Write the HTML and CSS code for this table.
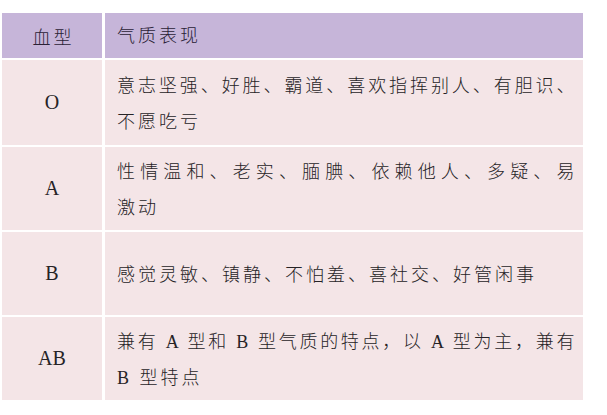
FILE: index.html
```html
<!DOCTYPE html>
<html lang="zh-CN">
<head>
<meta charset="utf-8">
<title>血型与气质</title>
<link rel="stylesheet" href="styles.css">
</head>
<body>
<div class="sheet">
  <div class="grid">
    <div class="cell head key">血型</div>
    <div class="cell head desc">气质表现</div>

    <div class="cell key latin">O</div>
    <div class="cell desc">
      <span class="ln j">意志坚强、好胜、霸道、喜欢指挥别人、有胆识、</span>
      <span class="ln">不愿吃亏</span>
    </div>

    <div class="cell key latin">A</div>
    <div class="cell desc">
      <span class="ln j">性情温和、老实、腼腆、依赖他人、多疑、易</span>
      <span class="ln">激动</span>
    </div>

    <div class="cell key latin">B</div>
    <div class="cell desc">
      <span class="ln">感觉灵敏、镇静、不怕羞、喜社交、好管闲事</span>
    </div>

    <div class="cell key latin">AB</div>
    <div class="cell desc">
      <span class="ln j">兼有 A 型和 B 型气质的特点，以 A 型为主，兼有</span>
      <span class="ln">B 型特点</span>
    </div>
  </div>
</div>
</body>
</html>
```

FILE: styles.css
```css
html, body {
  margin: 0;
  padding: 0;
  background: #ffffff;
}

.sheet {
  padding: 13px 0 0 2px;
  font-family: "Liberation Serif", "Noto Sans CJK SC", serif;
  color: #262326;
}

.grid {
  display: grid;
  grid-template-columns: 100px 478px;
  grid-template-rows: 45px 85px 83px 83px 83px;
  column-gap: 3px;
  row-gap: 2px;
  width: 581px;
}

.cell {
  background: #f4e5e7;
  font-size: 18px;
  font-weight: 300;
  letter-spacing: 3px;
}

.head {
  background: #c6b5d9;
  color: #2a2236;
}

.key {
  display: flex;
  align-items: center;
  justify-content: center;
  padding-left: 3px;
}

.latin {
  font-size: 20px;
  letter-spacing: 0;
  padding-left: 0;
}

.desc {
  display: flex;
  flex-direction: column;
  justify-content: center;
  padding: 2px 6px 0 12px;
  line-height: 36px;
}

.head.desc {
  line-height: 24px;
  padding-top: 0;
}

.ln {
  display: block;
  white-space: nowrap;
}

.ln.j {
  letter-spacing: 2.5px;
  text-align: justify;
  text-align-last: justify;
}
```
